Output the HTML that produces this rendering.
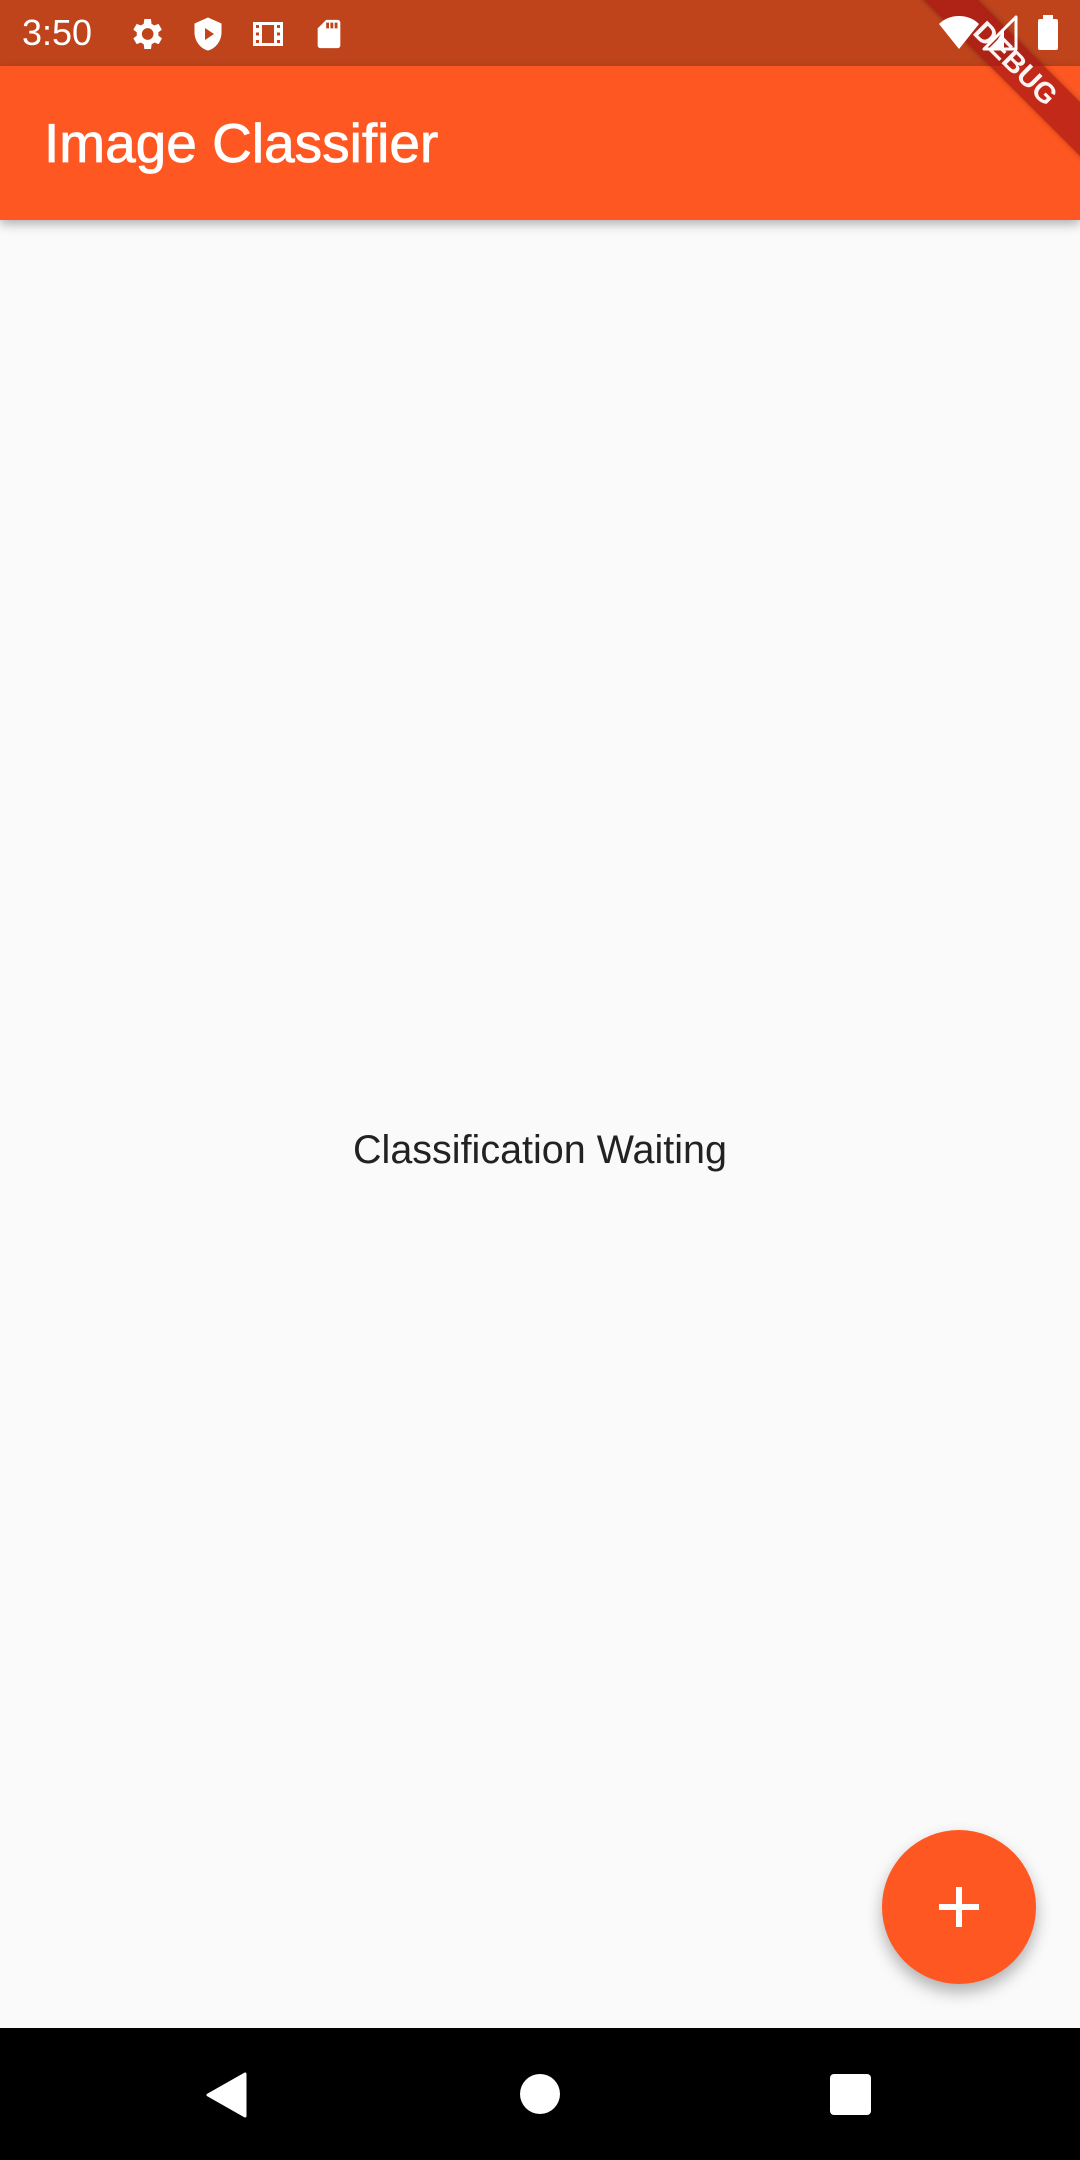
<!DOCTYPE html>
<html><head><meta charset="utf-8"><style>
html,body{margin:0;padding:0;width:1080px;height:2160px;overflow:hidden;background:#fafafa;font-family:"Liberation Sans",Roboto,sans-serif;position:relative}
.sb{position:absolute;left:0;top:0;width:1080px;height:66px;background:#bf441c}
.icons{position:absolute;left:0;top:0;width:1080px;height:66px;color:#fff}
.ab{position:absolute;left:0;top:66px;width:1080px;height:154px;background:#ff5722;box-shadow:0 4px 10px rgba(0,0,0,.3)}
.title{position:absolute;left:44px;top:0;line-height:154px;font-size:55px;color:#fff;font-weight:500;-webkit-text-stroke:0.8px #fff}
.center{position:absolute;left:0;width:1080px;top:1128px;text-align:center;font-size:39.5px;color:#222}
.fab{position:absolute;left:882px;top:1830px;width:154px;height:154px;border-radius:50%;background:#ff5722;box-shadow:0 8px 16px rgba(0,0,0,.3)}
.nav{position:absolute;left:0;top:2028px;width:1080px;height:132px;background:#000}
.banner{position:absolute;left:885px;top:45px;width:260px;height:38px;background:rgba(168,22,22,.7);transform:rotate(45deg);color:rgba(255,255,255,.95);font-weight:bold;font-size:29px;text-align:center;line-height:38px;box-shadow:0 0 6px rgba(0,0,0,.3)}
</style></head><body>
<div class="sb"></div>
<div class="ab"><div class="title">Image Classifier</div></div>
<div class="banner">DEBUG</div>
<div class="icons">
<div style="position:absolute;left:22px;top:12px;font-size:36px">3:50</div>
<svg style="position:absolute;left:126px;top:14px" width="40" height="40" viewBox="0 0 24 24" fill="#fff"><path d="M19.4 13a7.5 7.5 0 000-2l2.1-1.6-2-3.5-2.5 1a7 7 0 00-1.7-1L15 3h-4l-.4 2.9a7 7 0 00-1.7 1l-2.5-1-2 3.5L6.5 11a7.5 7.5 0 000 2l-2.1 1.6 2 3.5 2.5-1a7 7 0 001.7 1L11 21h4l.4-2.9a7 7 0 001.7-1l2.5 1 2-3.5zM13 15.5a3.5 3.5 0 110-7 3.5 3.5 0 010 7z"/></svg>
<svg style="position:absolute;left:190px;top:14px" width="36" height="40" viewBox="0 0 24 24" fill="#fff"><path d="M12 1L3 5v6c0 5.5 3.8 10.7 9 12 5.2-1.3 9-6.5 9-12V5zM10 8l6 4-6 4z"/></svg>
<svg style="position:absolute;left:248px;top:16px" width="40" height="36" viewBox="0 0 24 24" fill="#fff"><path d="M2 4h20v16H2zM4 6v2h2V6zm0 5v2h2v-2zm0 5v2h2v-2zm14-10v2h2V6zm0 5v2h2v-2zm0 5v2h2v-2zM8 6v12h8V6z"/></svg>
<svg style="position:absolute;left:312px;top:14px" width="34" height="40" viewBox="0 0 24 24" fill="#fff"><path d="M18 2h-8L4 8v12a2 2 0 002 2h12a2 2 0 002-2V4a2 2 0 00-2-2zM12 8h-2V4h2zm3 0h-2V4h2zm3 0h-2V4h2z"/></svg>
<svg style="position:absolute;left:938px;top:15px" width="42" height="36" viewBox="0 0 42 36" fill="#fff"><path d="M21 34L1 9C6 4 13 1 21 1s15 3 20 8z"/></svg>
<svg style="position:absolute;left:982px;top:15px" width="36" height="36" viewBox="0 0 36 36"><path d="M34 2v32H2z" fill="none" stroke="#fff" stroke-width="3" stroke-linejoin="round"/><path d="M22 14v20H10z" fill="#fff"/></svg>
<div style="position:absolute;left:1038px;top:19px;width:20px;height:31px;background:#fff;border-radius:2px"></div>
<div style="position:absolute;left:1043px;top:15px;width:10px;height:5px;background:#fff"></div>
</div>
<div class="center">Classification Waiting</div>
<div class="fab"><div style="position:absolute;left:57px;top:74px;width:40px;height:6px;background:#fff"></div><div style="position:absolute;left:74px;top:57px;width:6px;height:40px;background:#fff"></div></div>
<div class="nav">
<svg style="position:absolute;left:205px;top:44px" width="44" height="46" viewBox="0 0 44 46"><path d="M40 2v42L3 23z" fill="#fff" stroke="#fff" stroke-width="3" stroke-linejoin="round"/></svg>
<div style="position:absolute;left:520px;top:46px;width:40px;height:40px;border-radius:50%;background:#fff"></div>
<div style="position:absolute;left:830px;top:46px;width:41px;height:41px;border-radius:4px;background:#fff"></div>
</div>
</body></html>
